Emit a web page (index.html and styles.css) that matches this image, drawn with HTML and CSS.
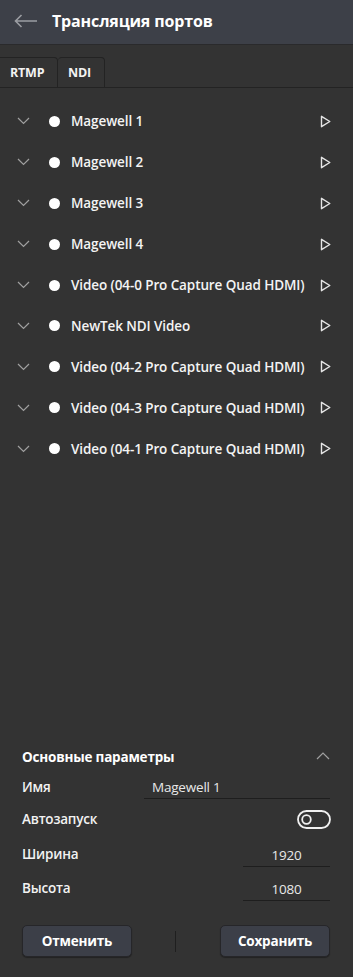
FILE: index.html
```html
<!DOCTYPE html>
<html lang="ru">
<head>
<meta charset="utf-8">
<title>Трансляция портов</title>
<link rel="stylesheet" href="styles.css">
</head>
<body>
<div class="app">
  <header class="topbar">
    <svg class="back" width="24" height="14" viewBox="0 0 24 14"><path d="M23 7H1.5M7.5 1L1.5 7l6 6" fill="none" stroke="#9b9da2" stroke-width="1.6"/></svg>
    <h1 class="title">Трансляция портов</h1>
  </header>
  <nav class="tabs">
    <div class="tab">RTMP</div>
    <div class="tab active">NDI</div>
    <div class="tab-fill"></div>
  </nav>
  <ul class="list">
    <li class="row"><svg class="chev" width="13" height="8" viewBox="0 0 13 8"><path d="M1 1l5.5 5.5L12 1" fill="none" stroke="#a0a0a0" stroke-width="1.2"/></svg><span class="dot"></span><span class="name">Magewell 1</span><svg class="play" width="11" height="13" viewBox="0 0 11 13"><path d="M1.5 1.3v10.4L9.8 6.5z" fill="none" stroke="#e6e6e6" stroke-width="1.4" stroke-linejoin="round"/></svg></li>
    <li class="row"><svg class="chev" width="13" height="8" viewBox="0 0 13 8"><path d="M1 1l5.5 5.5L12 1" fill="none" stroke="#a0a0a0" stroke-width="1.2"/></svg><span class="dot"></span><span class="name">Magewell 2</span><svg class="play" width="11" height="13" viewBox="0 0 11 13"><path d="M1.5 1.3v10.4L9.8 6.5z" fill="none" stroke="#e6e6e6" stroke-width="1.4" stroke-linejoin="round"/></svg></li>
    <li class="row"><svg class="chev" width="13" height="8" viewBox="0 0 13 8"><path d="M1 1l5.5 5.5L12 1" fill="none" stroke="#a0a0a0" stroke-width="1.2"/></svg><span class="dot"></span><span class="name">Magewell 3</span><svg class="play" width="11" height="13" viewBox="0 0 11 13"><path d="M1.5 1.3v10.4L9.8 6.5z" fill="none" stroke="#e6e6e6" stroke-width="1.4" stroke-linejoin="round"/></svg></li>
    <li class="row"><svg class="chev" width="13" height="8" viewBox="0 0 13 8"><path d="M1 1l5.5 5.5L12 1" fill="none" stroke="#a0a0a0" stroke-width="1.2"/></svg><span class="dot"></span><span class="name">Magewell 4</span><svg class="play" width="11" height="13" viewBox="0 0 11 13"><path d="M1.5 1.3v10.4L9.8 6.5z" fill="none" stroke="#e6e6e6" stroke-width="1.4" stroke-linejoin="round"/></svg></li>
    <li class="row"><svg class="chev" width="13" height="8" viewBox="0 0 13 8"><path d="M1 1l5.5 5.5L12 1" fill="none" stroke="#a0a0a0" stroke-width="1.2"/></svg><span class="dot"></span><span class="name">Video (04-0 Pro Capture Quad HDMI)</span><svg class="play" width="11" height="13" viewBox="0 0 11 13"><path d="M1.5 1.3v10.4L9.8 6.5z" fill="none" stroke="#e6e6e6" stroke-width="1.4" stroke-linejoin="round"/></svg></li>
    <li class="row"><svg class="chev" width="13" height="8" viewBox="0 0 13 8"><path d="M1 1l5.5 5.5L12 1" fill="none" stroke="#a0a0a0" stroke-width="1.2"/></svg><span class="dot"></span><span class="name">NewTek NDI Video</span><svg class="play" width="11" height="13" viewBox="0 0 11 13"><path d="M1.5 1.3v10.4L9.8 6.5z" fill="none" stroke="#e6e6e6" stroke-width="1.4" stroke-linejoin="round"/></svg></li>
    <li class="row"><svg class="chev" width="13" height="8" viewBox="0 0 13 8"><path d="M1 1l5.5 5.5L12 1" fill="none" stroke="#a0a0a0" stroke-width="1.2"/></svg><span class="dot"></span><span class="name">Video (04-2 Pro Capture Quad HDMI)</span><svg class="play" width="11" height="13" viewBox="0 0 11 13"><path d="M1.5 1.3v10.4L9.8 6.5z" fill="none" stroke="#e6e6e6" stroke-width="1.4" stroke-linejoin="round"/></svg></li>
    <li class="row"><svg class="chev" width="13" height="8" viewBox="0 0 13 8"><path d="M1 1l5.5 5.5L12 1" fill="none" stroke="#a0a0a0" stroke-width="1.2"/></svg><span class="dot"></span><span class="name">Video (04-3 Pro Capture Quad HDMI)</span><svg class="play" width="11" height="13" viewBox="0 0 11 13"><path d="M1.5 1.3v10.4L9.8 6.5z" fill="none" stroke="#e6e6e6" stroke-width="1.4" stroke-linejoin="round"/></svg></li>
    <li class="row"><svg class="chev" width="13" height="8" viewBox="0 0 13 8"><path d="M1 1l5.5 5.5L12 1" fill="none" stroke="#a0a0a0" stroke-width="1.2"/></svg><span class="dot"></span><span class="name">Video (04-1 Pro Capture Quad HDMI)</span><svg class="play" width="11" height="13" viewBox="0 0 11 13"><path d="M1.5 1.3v10.4L9.8 6.5z" fill="none" stroke="#e6e6e6" stroke-width="1.4" stroke-linejoin="round"/></svg></li>
  </ul>
  <section class="settings">
    <div class="sec-head">
      <span class="sec-title">Основные параметры</span>
      <svg class="chev-up" width="14" height="8" viewBox="0 0 14 8"><path d="M1 7l6-6 6 6" fill="none" stroke="#a0a0a0" stroke-width="1.2"/></svg>
    </div>
    <div class="field f-name">
      <span class="label">Имя</span>
      <div class="input wide">Magewell 1</div>
    </div>
    <div class="field f-auto">
      <span class="label">Автозапуск</span>
      <svg class="toggle" width="34" height="19" viewBox="0 0 34 19"><rect x="1" y="1" width="32" height="17" rx="8.5" fill="none" stroke="#f0f0f0" stroke-width="1.8"/><circle cx="9.5" cy="9.5" r="4.3" fill="none" stroke="#f0f0f0" stroke-width="1.8"/></svg>
    </div>
    <div class="field f-w">
      <span class="label">Ширина</span>
      <div class="input narrow">1920</div>
    </div>
    <div class="field f-h">
      <span class="label">Высота</span>
      <div class="input narrow">1080</div>
    </div>
    <div class="actions">
      <button class="btn">Отменить</button>
      <span class="sep"></span>
      <button class="btn">Сохранить</button>
    </div>
  </section>
</div>
</body>
</html>
```
FILE: styles.css
```css
* { box-sizing: border-box; }
html, body { margin: 0; padding: 0; }
body {
  background: #333333;
  font-family: "Open Sans", "Noto Sans", sans-serif;
  color: #ffffff;
}
.app {
  width: 353px;
  height: 977px;
  display: flex;
  flex-direction: column;
  overflow: hidden;
}
.topbar {
  height: 45px;
  background: #3d4048;
  border-bottom: 1px solid #2a2a2c;
  display: flex;
  align-items: center;
  padding-left: 14px;
  flex: none;
}
.back { margin-right: 14px; margin-top: -3px; }
.title {
  margin: 0;
  font-size: 16px;
  font-weight: 700;
  letter-spacing: -0.15px;
  margin-top: -3px;
}
.tabs {
  margin-top: 12px;
  height: 31px;
  display: flex;
  flex: none;
}
.tab {
  height: 31px;
  padding: 0 10px;
  display: flex;
  align-items: center;
  font-size: 12.5px;
  font-weight: 700;
  letter-spacing: -0.2px;
  border: 1px solid #232323;
  border-radius: 4px 4px 0 0;
  color: #f2f2f2;
}
.tab:first-child { width: 58px; border-left: none; border-top-left-radius: 0; }
.tab.active { width: 47px; border-left: none; padding-left: 10px; }
.tab-fill { flex: 1; border-bottom: 1px solid #232323; }
.list {
  list-style: none;
  margin: 0;
  padding: 13px 0 0;
  flex: 1;
}
.row {
  height: 40.9px;
  display: flex;
  align-items: center;
  padding-left: 17px;
  padding-right: 22px;
}
.chev { flex: none; margin-right: 19px; }
.dot {
  width: 11px;
  height: 11px;
  border-radius: 50%;
  background: #ffffff;
  flex: none;
  margin-right: 11px;
}
.name {
  flex: 1;
  font-size: 13.5px;
  font-weight: 600;
  letter-spacing: -0.1px;
  white-space: nowrap;
  color: #f4f4f4;
}
.play { flex: none; }
.settings {
  flex: none;
  padding: 0 23px 20px 22px;
}
.sec-head {
  height: 30px;
  display: flex;
  align-items: center;
  justify-content: space-between;
}
.sec-title { font-size: 13.5px; font-weight: 700; letter-spacing: -0.2px; }
.chev-up { margin-top: -3px; margin-right: 0; }
.field {
  display: flex;
  align-items: center;
  justify-content: space-between;
}
.label { font-size: 13.5px; font-weight: 600; letter-spacing: -0.2px; color: #f2f2f2; }
.f-name { height: 29px; }
.f-auto { height: 36px; }
.f-w { height: 34px; }
.f-h { height: 34px; }
.input {
  height: 23px;
  border-bottom: 1px solid #1e1e1e;
  font-size: 13.5px;
  letter-spacing: -0.2px;
  color: #e8e8e8;
  display: flex;
  align-items: center;
  margin-top: 2px;
}
.input.wide { width: 186px; padding-left: 8px; }
.input.narrow { width: 87px; justify-content: center; }
.toggle { margin-right: -1px; }
.actions {
  margin-top: 20px;
  display: flex;
  align-items: center;
  justify-content: space-between;
}
.btn {
  width: 110px;
  height: 32px;
  background: #3c3f48;
  border: 1px solid #262629;
  border-radius: 5px;
  box-shadow: 0 1px 1px rgba(0,0,0,0.35);
  color: #ffffff;
  font-family: "Open Sans", "Noto Sans", sans-serif;
  font-size: 13.5px;
  font-weight: 700;
  letter-spacing: -0.2px;
  padding: 0;
}
.sep { width: 1px; height: 21px; background: #1f1f1f; margin-right: 2px; }
```
